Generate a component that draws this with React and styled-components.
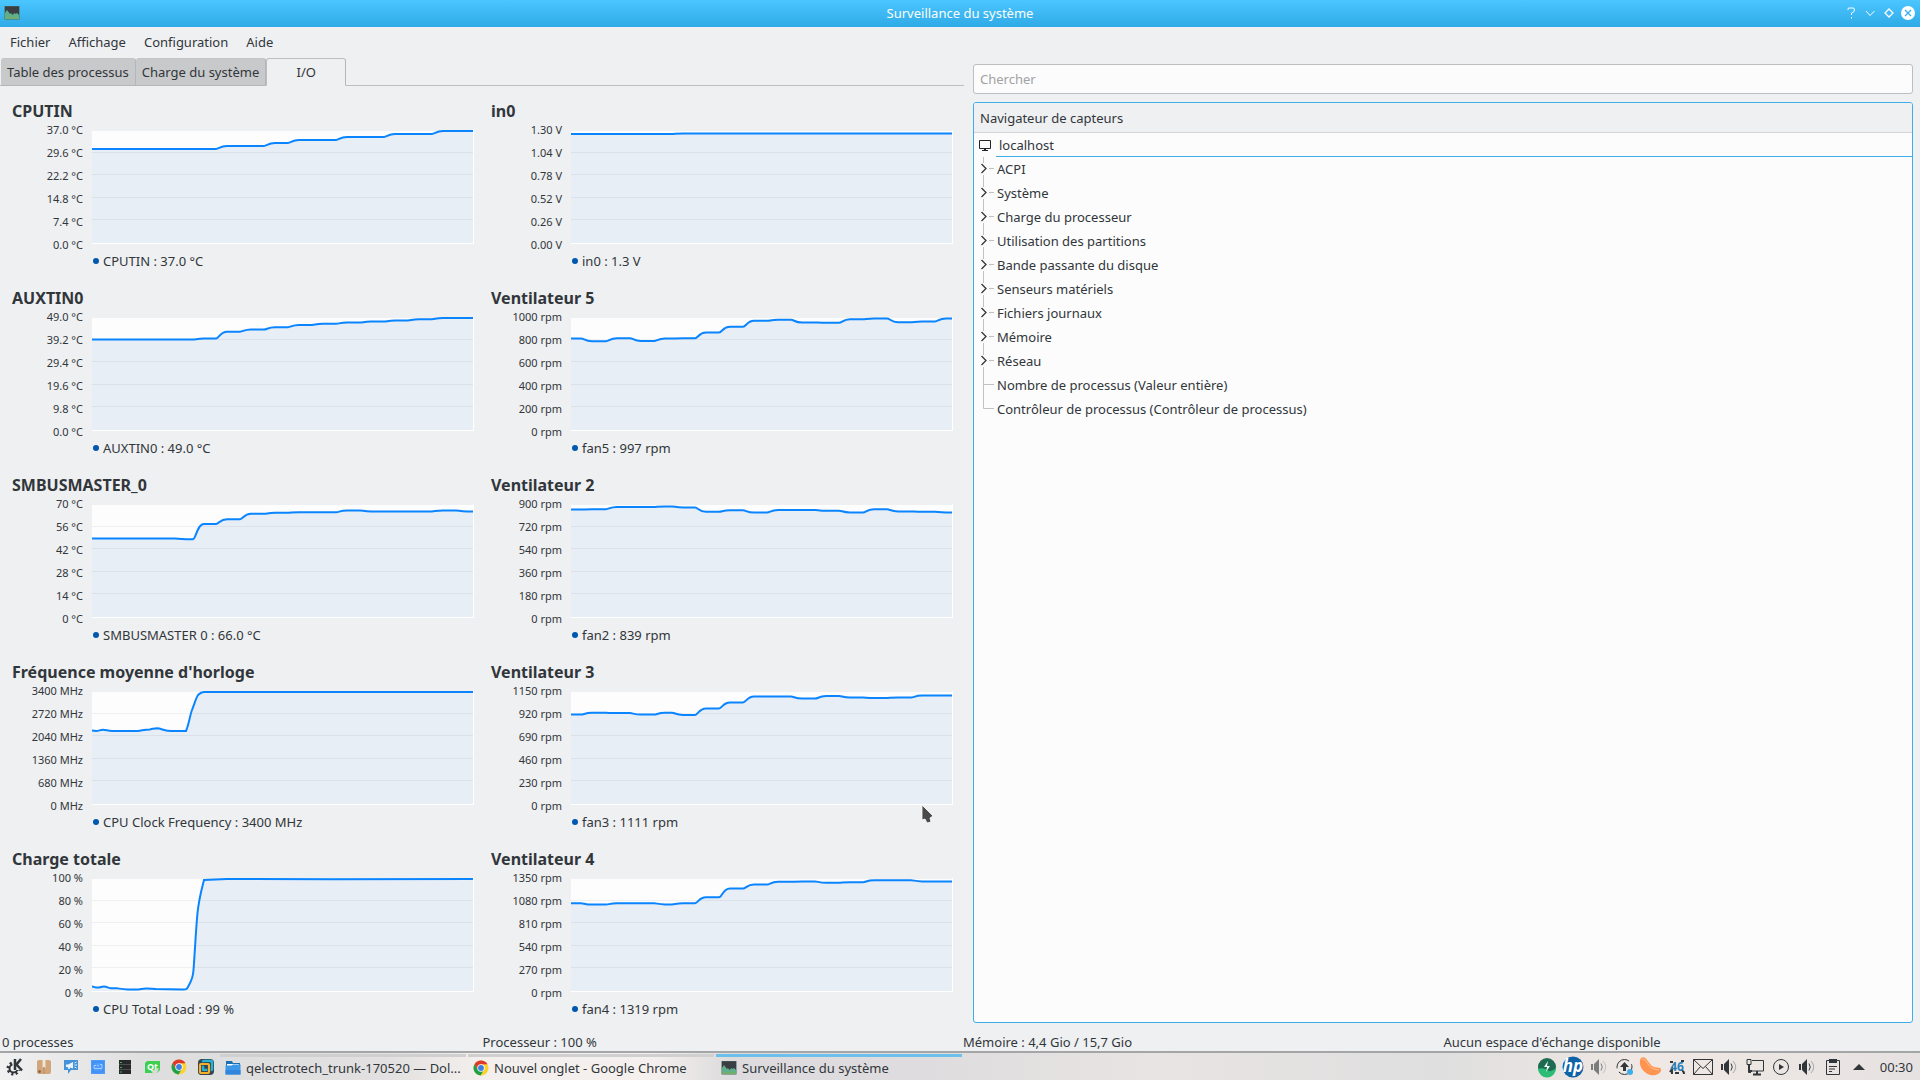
import { useState } from "react";
import styled, { createGlobalStyle } from "styled-components";

const GlobalStyle = createGlobalStyle`
  * {
    box-sizing: border-box;
  }

  body {
    margin: 0;
    background: #eff0f1;
    color: #31363b;
    font: 13px/18px "Noto Sans", "Open Sans", sans-serif;
  }

  button,
  input {
    font: inherit;
    color: inherit;
  }

  button {
    border: 0;
    padding: 0;
    background: none;
  }
`;

// x positions where the plotted value moves to the next level
const BREAKS = [10, 35, 59, 83, 101, 124, 148, 172, 196, 220, 244, 268, 292, 316, 340, 364];

const stepPath = (levels) => {
  let d = `M0 ${levels[0]}`;
  BREAKS.forEach((x, i) => {
    const from = levels[i];
    const to = levels[i + 1];
    d += ` L${x} ${from} C${x + 3} ${from} ${x + 4} ${to} ${x + 11} ${to}`;
  });
  return `${d} L381 ${levels[16]}`;
};

const FREQUENCY =
  "M0 39.5 L4 40 C7 40 8 38.8 11 38.8 C14 38.8 16 40 20 40 L46 40 C50 39.6 52 38.6 58 38.4 C61 38 62 37.3 65 37.3 C70 37.6 72 40 80 40 L94 40 C97 33 98 24 100 19 C102 14 104 7 106 4 Q109 1 112 1 L381 1";
const LOAD =
  "M0 108.5 C3 109 3 109.8 6 109.6 S9 108.4 12 108.4 S15 110.2 19 110.2 L25 110.3 C30 111 32 111.3 36 111.4 L46 111.4 C50 110.8 52 110.4 55 110.5 L64 111.1 L90 111.6 C95 111.8 95 111 97 107 Q101 100 101.500 92 C103 72 104 50 105.500 35 C107 20 110 10 112 2 L135 1 L240 1.300 L381 1";

const SENSORS = [
  {
    title: "CPUTIN",
    ticks: ["37.0 °C", "29.6 °C", "22.2 °C", "14.8 °C", "7.4 °C", "0.0 °C"],
    legend: "CPUTIN : 37.0 °C",
    path: stepPath([19, 19, 19, 19, 19, 19, 16, 16, 13, 10, 10, 7, 7, 4, 4, 1, 1]),
  },
  {
    title: "in0",
    ticks: ["1.30 V", "1.04 V", "0.78 V", "0.52 V", "0.26 V", "0.00 V"],
    legend: "in0 : 1.3 V",
    path: stepPath([4, 4, 4, 4, 4, 3.5, 3.5, 3.5, 3.5, 3.5, 3.5, 3.5, 3.5, 3.5, 3.5, 3.5, 3.5]),
  },
  {
    title: "AUXTIN0",
    ticks: ["49.0 °C", "39.2 °C", "29.4 °C", "19.6 °C", "9.8 °C", "0.0 °C"],
    legend: "AUXTIN0 : 49.0 °C",
    path: stepPath([22.5, 22.5, 22.5, 22.5, 22.5, 21.5, 14.7, 12.5, 10.2, 8, 6.8, 5.6, 4.6, 3.5, 2.2, 1, 1]),
  },
  {
    title: "Ventilateur 5",
    ticks: ["1000 rpm", "800 rpm", "600 rpm", "400 rpm", "200 rpm", "0 rpm"],
    legend: "fan5 : 997 rpm",
    path: stepPath([21.5, 24.2, 21.2, 24, 21.5, 21.2, 15.5, 9.8, 3.8, 2.8, 5.5, 5.8, 2.2, 1.5, 5.2, 4.5, 1.5]),
  },
  {
    title: "SMBUSMASTER_0",
    ticks: ["70 °C", "56 °C", "42 °C", "28 °C", "14 °C", "0 °C"],
    legend: "SMBUSMASTER 0 : 66.0 °C",
    path: stepPath([34.5, 34.5, 34.5, 34.5, 35.2, 20, 15.2, 9.8, 8.8, 8.2, 8.2, 6.5, 7.4, 7.4, 7.4, 6.5, 7.4]),
  },
  {
    title: "Ventilateur 2",
    ticks: ["900 rpm", "720 rpm", "540 rpm", "360 rpm", "180 rpm", "0 rpm"],
    legend: "fan2 : 839 rpm",
    path: stepPath([5.6, 5.2, 3, 3, 2.4, 3.4, 7.8, 6.3, 8.5, 5.9, 5.9, 6.7, 8.5, 5.3, 7.4, 7.8, 8.5]),
  },
  {
    title: "Fréquence moyenne d'horloge",
    ticks: ["3400 MHz", "2720 MHz", "2040 MHz", "1360 MHz", "680 MHz", "0 MHz"],
    legend: "CPU Clock Frequency : 3400 MHz",
    path: FREQUENCY,
  },
  {
    title: "Ventilateur 3",
    ticks: ["1150 rpm", "920 rpm", "690 rpm", "460 rpm", "230 rpm", "0 rpm"],
    legend: "fan3 : 1111 rpm",
    path: stepPath([23.6, 21.8, 22.1, 23.6, 21.8, 23.9, 17.4, 11.5, 5.5, 5.5, 7.6, 5.1, 6.5, 6.9, 6.5, 4.6, 4.6]),
  },
  {
    title: "Charge totale",
    ticks: ["100 %", "80 %", "60 %", "40 %", "20 %", "0 %"],
    legend: "CPU Total Load : 99 %",
    path: LOAD,
  },
  {
    title: "Ventilateur 4",
    ticks: ["1350 rpm", "1080 rpm", "810 rpm", "540 rpm", "270 rpm", "0 rpm"],
    legend: "fan4 : 1319 rpm",
    path: stepPath([25.2, 26.6, 25.3, 25.2, 26.4, 25.2, 19.3, 10.5, 6.5, 3.8, 3.4, 4.8, 4.2, 2.2, 2.2, 3.4, 3.4]),
  },
];

const BRANCHES = [
  "ACPI",
  "Système",
  "Charge du processeur",
  "Utilisation des partitions",
  "Bande passante du disque",
  "Senseurs matériels",
  "Fichiers journaux",
  "Mémoire",
  "Réseau",
];
const LEAVES = [
  "Nombre de processus (Valeur entière)",
  "Contrôleur de processus (Contrôleur de processus)",
];

const Chart = ({ sensor }) => (
  <ChartCell>
    <ChartTitle>{sensor.title}</ChartTitle>
    <ChartBody>
      <Ticks>
        {sensor.ticks.map((tick) => (
          <span key={tick}>{tick}</span>
        ))}
      </Ticks>
      <Plot viewBox="0 0 382 114" preserveAspectRatio="none" aria-hidden="true">
        <rect y="1" width="382" height="113" fill="#fdfdfd" />
        <path d={`${sensor.path} V113 H0 Z`} fill="#e7eef6" />
        {[22, 44, 67, 89].map((y) => (
          <rect key={y} y={y} width="381" height="1" fill="#000" opacity="0.05" />
        ))}
        <rect y="113" width="382" height="1" fill="#fff" />
        <rect x="381" width="1" height="114" fill="#fff" />
        <path d={sensor.path} fill="none" stroke="#0a84ff" strokeWidth="2" />
      </Plot>
    </ChartBody>
    <Legend>{sensor.legend}</Legend>
  </ChartCell>
);

const MonitorIcon = ({ size = 16 }) => (
  <svg width={size} height={size} viewBox="0 0 16 16" aria-hidden="true">
    <rect x="0.500" y="1" width="15" height="13.500" fill="#4d6b62" />
    <rect x="1" y="1.500" width="14" height="10" fill="#3a3f44" />
    <path d="M1 13V8L3 5l3 4 1-1 1.500 2 2-2 1 1 1.500-1L15 10v3z" fill="#5fb08a" />
    <rect x="1" y="12" width="14" height="2" fill="#6fae6d" />
  </svg>
);

const ChromeIcon = ({ size = 16 }) => (
  <svg width={size} height={size} viewBox="0 0 16 16" aria-hidden="true">
    <circle cx="8" cy="8" r="7.500" fill="#fdd22e" />
    <path d="M1.500 4.250A7.500 7.500 0 0 1 14.500 4.250L8 4.500 4.700 9.800z" fill="#de3a2b" />
    <path d="M1.500 4.250A7.500 7.500 0 0 0 7.600 15.500L11 9.800 4.900 9.800z" fill="#1fa04b" />
    <circle cx="8" cy="8" r="3.700" fill="#fff" />
    <circle cx="8" cy="8" r="2.900" fill="#3f7fe0" />
  </svg>
);

const FolderIcon = () => (
  <svg width="16" height="16" viewBox="0 0 16 16" aria-hidden="true">
    <path d="M1 1h6l1 2h7v3H1z" fill="#1b6fb5" />
    <rect x="2" y="4" width="12" height="3" fill="#fff" />
    <path d="M0.500 5.500h6l1.500-1h7.500V14.500h-15z" fill="#3d97e8" />
    <path d="M0.500 10h15v4.500h-15z" fill="#2f86dc" />
  </svg>
);

const LAUNCHERS = [
  {
    name: "Menu d'applications",
    icon: (
      <g transform="translate(-2 0)">
        <circle cx="6.500" cy="9.500" r="5.500" fill="none" stroke="#31363b" strokeWidth="3" strokeDasharray="2 2.300" />
        <circle cx="6.500" cy="9.500" r="4" fill="none" stroke="#31363b" strokeWidth="2" />
        <rect x="5.500" y="-1" width="11" height="12" fill="#ededee" />
        <path d="M8 0v11M14 0L9.500 5.500l5.500 6" fill="none" stroke="#31363b" strokeWidth="2.500" />
      </g>
    ),
  },
  {
    name: "Paquets",
    icon: (
      <>
        <rect x="1" y="1" width="14" height="14" rx="2" fill="#d1a67c" />
        <path d="M6.500 1h3v8l-1.500-1-1.500 1z" fill="#f3e4d2" />
        <path d="M8 8v7" stroke="#b98a60" />
        <circle cx="3.500" cy="12.500" r="1.500" fill="#8f6a48" />
      </>
    ),
  },
  {
    name: "Messages",
    icon: (
      <>
        <path d="M1 1h14v10H8l-3 4v-4H1z" fill="#4592d6" />
        <path d="M3 5.500h2l5-2.500v6.500L5 8H3zM4.500 8h2l.5 2H5.500z" fill="#e8f4ff" />
        <path d="M11.500 4l2-1M11.500 6h2.500M11.500 8l2 1" stroke="#e8f4ff" />
      </>
    ),
  },
  {
    name: "QElectroTech",
    icon: (
      <>
        <rect x="1" y="1" width="14" height="14" fill="#4d9bff" />
        <path d="M3 3h10v10H3z" fill="none" stroke="#3c86ea" />
        <path d="M4 9.500V6.500h2M10 5.500h2v4M4 9.500h8M7 6l2 1" fill="none" stroke="#a5d0ff" />
      </>
    ),
  },
  {
    name: "Terminal",
    icon: (
      <>
        <rect x="2" y="1" width="12" height="14" fill="#26282a" />
        <path d="M2 5.500h12M2 10.500h12" stroke="#4b4f52" />
        <path d="M3 3.500h2M3 8.500h2M3 13h2" stroke="#3bb24a" />
      </>
    ),
  },
  {
    name: "Qt Creator",
    icon: (
      <>
        <path d="M3 2h13v9l-3 3H1V4z" fill="#3fcf4f" />
        <text x="3" y="11" fontSize="9" fontWeight="700" fill="#fff">
          Qt
        </text>
        <path d="M8 15l1-4 6-2-2 5-3 2z" fill="#d8dbd8" />
      </>
    ),
  },
  { name: "Google Chrome", icon: null },
  {
    name: "VMware",
    icon: (
      <>
        <rect width="16" height="16" rx="4" fill="#34464f" />
        <rect x="5" y="2" width="9" height="9" rx="1" fill="none" stroke="#26b4d6" strokeWidth="2.500" />
        <rect x="2" y="5" width="9" height="9" rx="1" fill="none" stroke="#34464f" strokeWidth="3.500" />
        <rect x="2" y="5" width="9" height="9" rx="1" fill="none" stroke="#f5ae2d" strokeWidth="2.200" />
      </>
    ),
  },
];

const Speaker = ({ faded }) => (
  <g fill="#31363b" opacity={faded ? 0.6 : 1}>
    <path d="M0 5h2v6H0zM3 5l5-5v16l-5-5z" />
    <path d="M10 4.500q2.500 3.500 0 7" fill="none" stroke="#31363b" />
    <path d="M12 2q5.500 6 0 12" fill="none" stroke="#a5a8ab" />
  </g>
);

const TRAY = [
  {
    name: "Énergie",
    icon: (
      <>
        <circle cx="8" cy="8" r="9" fill="#1f6b52" />
        <path d="M-1 10q5-2 9 1t9-2a9 9 0 0 1-18 1z" fill="#2bbd76" />
        <path d="M9 2L5 8h3l-1 5 4-6H8z" fill="#e9fff3" />
      </>
    ),
  },
  {
    name: "HP",
    icon: (
      <>
        <circle cx="8" cy="8" r="10.500" fill="#0d62a8" />
        <text x="8" y="13" textAnchor="middle" fontSize="17" fontWeight="700" fontStyle="italic" fill="#fff">
          hp
        </text>
      </>
    ),
  },
  { name: "Son", icon: <Speaker faded /> },
  {
    name: "Mises à jour",
    icon: (
      <>
        <circle cx="7.500" cy="8" r="7.500" fill="none" stroke="#31363b" strokeDasharray="18 4" />
        <path d="M7.500 3L3 8h3v4h3V8h3z" fill="#31363b" />
        <circle cx="13" cy="13" r="3" fill="#3daee9" />
      </>
    ),
  },
  {
    name: "Clementine",
    icon: (
      <>
        <path d="M-2-1C3-4 5 4 9 7s9 0 9 4-8 8-15 3S-4 2-2-1z" fill="#ff9450" />
        <path d="M-1 0q4 0 6 5t11 6" fill="none" stroke="#ffc08e" />
      </>
    ),
  },
  {
    name: "Température",
    icon: (
      <>
        <path d="M1 3h3M1 13l2-3v5M13 12q2 0 2 3M6 14h4M12 2h3" fill="none" stroke="#31363b" strokeWidth="2" />
        <text x="8" y="12" textAnchor="middle" fontSize="12" fontWeight="700" fill="#2980b9">
          46
        </text>
      </>
    ),
  },
  {
    name: "Courrier",
    icon: <path d="M-1.500 0.500h19v15h-19zl9.500 9 9.500-9M-1.500 15.500l7-8M17.500 15.500l-7-8" fill="none" stroke="#31363b" />,
  },
  { name: "Volume 1", icon: <Speaker /> },
  {
    name: "Réseau",
    icon: (
      <>
        <path d="M5 1.500h11.500v10.500H4M1.500 7v6.500H4" fill="none" stroke="#31363b" />
        <path d="M0 0.500h4v5H0z" fill="none" stroke="#31363b" />
        <path d="M2 6v6h3M10 12v3M6 15.500h8" fill="none" stroke="#31363b" strokeWidth="2" />
      </>
    ),
  },
  {
    name: "Lecture",
    icon: (
      <>
        <circle cx="8" cy="8" r="7.500" fill="none" stroke="#31363b" />
        <path d="M6 5l5 3-5 3z" fill="#31363b" />
      </>
    ),
  },
  { name: "Volume 2", icon: <Speaker /> },
  {
    name: "Presse-papiers",
    icon: (
      <>
        <path d="M1.500 1.500h13v14h-13z" fill="none" stroke="#31363b" />
        <path d="M4 0h8v4H4z" fill="#31363b" />
        <path d="M4 7.500h8M4 10h6M4 12.500h3" stroke="#31363b" />
      </>
    ),
  },
  { name: "Afficher plus", icon: <path d="M2 11l6-6 6 6z" fill="#31363b" /> },
];

const App = () => {
  const [tab, setTab] = useState("I/O");

  return (
    <Desktop>
      <GlobalStyle />
      <TitleBar>
        <TitleIcon>
          <MonitorIcon />
        </TitleIcon>
        <WindowTitle>Surveillance du système</WindowTitle>
        <WindowButtons>
          <WindowButton aria-label="Aide">
            <svg width="16" height="16" viewBox="0 0 16 16" fill="none" stroke="#fff">
              <path d="M5 5V4q0-1 1-1h4q1.500 0 1.500 2T8.500 8v2M8.500 12v1.500" />
            </svg>
          </WindowButton>
          <WindowButton aria-label="Réduire">
            <svg width="16" height="16" viewBox="0 0 16 16" fill="none" stroke="#fff">
              <path d="M4 6l4 4.500L12.500 6" />
            </svg>
          </WindowButton>
          <WindowButton aria-label="Restaurer">
            <svg width="16" height="16" viewBox="0 0 16 16" fill="none" stroke="#fff" strokeWidth="1.300">
              <path d="M8 4l4 4-4 4-4-4z" />
            </svg>
          </WindowButton>
          <WindowButton aria-label="Fermer">
            <svg width="16" height="16" viewBox="0 0 16 16">
              <circle cx="8" cy="8" r="7" fill="#fff" />
              <path d="M5 5l6 6M11 5l-6 6" stroke="#35b0ee" strokeWidth="1.300" />
            </svg>
          </WindowButton>
        </WindowButtons>
      </TitleBar>

      <MenuBar>
        {["Fichier", "Affichage", "Configuration", "Aide"].map((item) => (
          <MenuButton key={item}>{item}</MenuButton>
        ))}
      </MenuBar>

      <Main>
        <Worksheet>
          <Tabs role="tablist">
            {["Table des processus", "Charge du système", "I/O"].map((name) => (
              <Tab key={name} role="tab" aria-selected={tab === name} $active={tab === name} onClick={() => setTab(name)}>
                {name}
              </Tab>
            ))}
          </Tabs>
          <Charts>
            {SENSORS.map((sensor) => (
              <Chart key={sensor.title} sensor={sensor} />
            ))}
          </Charts>
        </Worksheet>

        <Sidebar>
          <Search type="search" placeholder="Chercher" aria-label="Chercher" />
          <Browser>
            <BrowserHeader>Navigateur de capteurs</BrowserHeader>
            <HostRow>
              <svg width="12" height="11" viewBox="0 0 12 11" aria-hidden="true">
                <path d="M0.500 0.500h11v8h-11z" fill="none" stroke="#232629" />
                <path d="M5 8.500h2V10h2v1H3v-1h2z" fill="#232629" />
              </svg>
              <HostName>localhost</HostName>
            </HostRow>
            <Tree>
              {BRANCHES.map((name) => (
                <TreeRow key={name}>
                  <Expander aria-label={`Développer ${name}`}>
                    <svg width="16" height="24" viewBox="0 0 16 24">
                      <path d="M3.500 0v6M3.500 18v6M9 11.500h5" stroke="#bfc1c2" />
                      <path d="M1.500 7L6 11.500 1.500 16" fill="none" stroke="#31363b" strokeWidth="1.300" />
                    </svg>
                  </Expander>
                  {name}
                </TreeRow>
              ))}
              {LEAVES.map((name, i) => (
                <TreeRow key={name}>
                  <svg width="16" height="24" viewBox="0 0 16 24" aria-hidden="true">
                    <path
                      d={i === LEAVES.length - 1 ? "M3.500 0v11.500H14" : "M3.500 0v24M3.500 11.500H14"}
                      fill="none"
                      stroke="#bfc1c2"
                    />
                  </svg>
                  {name}
                </TreeRow>
              ))}
            </Tree>
          </Browser>
        </Sidebar>
      </Main>

      <StatusBar>
        <span>0 processes</span>
        <span>Processeur : 100 %</span>
        <span>Mémoire : 4,4 Gio / 15,7 Gio</span>
        <span>Aucun espace d'échange disponible</span>
      </StatusBar>

      <Panel>
        <Launchers>
          {LAUNCHERS.map(({ name, icon }) => (
            <PanelButton key={name} aria-label={name}>
              {icon ? (
                <svg width="16" height="16" viewBox="0 0 16 16" overflow="visible">
                  {icon}
                </svg>
              ) : (
                <ChromeIcon />
              )}
            </PanelButton>
          ))}
        </Launchers>
        <Tasks>
          <Task>
            <FolderIcon />
            <TaskLabel>qelectrotech_trunk-170520 — Dol...</TaskLabel>
          </Task>
          <Task>
            <ChromeIcon />
            <TaskLabel>Nouvel onglet - Google Chrome</TaskLabel>
          </Task>
          <Task $active>
            <MonitorIcon />
            <TaskLabel>Surveillance du système</TaskLabel>
          </Task>
        </Tasks>
        <Tray>
          {TRAY.map(({ name, icon }) => (
            <PanelButton key={name} aria-label={name} $tray>
              <svg width="16" height="16" viewBox="0 0 16 16" overflow="visible">
                {icon}
              </svg>
            </PanelButton>
          ))}
          <Clock>00:30</Clock>
        </Tray>
      </Panel>

      <Pointer width="14" height="22" viewBox="0 0 14 22" aria-hidden="true">
        <path d="M1 1v15l3-1 2 4 4-1-1-4 3-2z" fill="#4a4a4a" stroke="#fff" strokeOpacity="0.8" />
      </Pointer>
    </Desktop>
  );
};

export default App;

const Desktop = styled.div`
  position: relative;
  display: flex;
  flex-direction: column;
  min-height: 100vh;
`;

const TitleBar = styled.header`
  display: grid;
  grid-template-columns: 1fr auto 1fr;
  align-items: center;
  height: 27px;
  padding: 0 4px 2px;
  background: linear-gradient(#4cc6ff, #2eaae6);
  color: #fcfcfc;
`;

const TitleIcon = styled.span`
  display: flex;
`;

const WindowTitle = styled.h1`
  margin: 0;
  font-size: 13px;
  font-weight: 400;
`;

const WindowButtons = styled.div`
  display: flex;
  justify-content: flex-end;
  gap: 3px;
`;

const WindowButton = styled.button`
  display: flex;
`;

const MenuBar = styled.nav`
  display: flex;
  height: 31px;
  padding: 0 1px 2px;
`;

const MenuButton = styled.button`
  padding: 0 9px;
`;

const Main = styled.main`
  flex: 1;
  display: grid;
  grid-template-columns: 964fr 940fr;
  gap: 9px;
  padding-right: 7px;
`;

const Worksheet = styled.section`
  min-width: 0;
`;

const Tabs = styled.div`
  display: flex;
  height: 28px;
  padding-left: 1px;
  box-shadow: inset 0 -1px #bcbebf;
`;

const Tab = styled.button`
  min-width: 80px;
  padding: 0 6px;
  border: 1px solid ${({ $active }) => ($active ? "#bcbebf" : "#c4c6c7")};
  border-bottom-color: ${({ $active }) => ($active ? "#eff0f1" : "#b4b6b7")};
  border-right-color: #b4b6b7;
  border-left-width: ${({ $active }) => ($active ? "1px" : "0")};
  border-radius: 3px 3px 0 0;
  background: ${({ $active }) => ($active ? "#eff0f1" : "#c8c9ca")};
`;

const Charts = styled.div`
  display: grid;
  grid-template-columns: 1fr 1fr;
  gap: 20px 17px;
  padding: 18px 11px 0 12px;
`;

const ChartCell = styled.article`
  min-width: 0;
`;

const ChartTitle = styled.h2`
  margin: 0;
  font-size: 16px;
  line-height: 14px;
`;

const ChartBody = styled.div`
  display: flex;
  align-items: center;
  gap: 9px;
`;

const Ticks = styled.div`
  display: flex;
  flex-direction: column;
  flex: 0 0 71px;
  font-size: 11px;
  line-height: 23px;
  text-align: right;
`;

const Plot = styled.svg`
  flex: 1;
  min-width: 0;
  height: 114px;
`;

const Legend = styled.div`
  display: flex;
  align-items: center;
  gap: 4px;
  padding-left: 81px;
  line-height: 20px;
  margin-top: -5px;

  &::before {
    content: "";
    width: 6px;
    height: 6px;
    border-radius: 50%;
    background: #0057ae;
  }
`;

const Sidebar = styled.aside`
  display: flex;
  flex-direction: column;
  gap: 8px;
  min-width: 0;
  padding-top: 6px;
`;

const Search = styled.input`
  width: 100%;
  height: 30px;
  padding: 0 6px;
  border: 1px solid #bcbebf;
  border-radius: 3px;
  background: #fcfcfc;
  outline: none;

  &::placeholder {
    color: #a0a2a4;
  }
`;

const Browser = styled.div`
  flex: 1;
  border: 1px solid #3daee9;
  border-radius: 3px;
  background: #fcfcfc;
  overflow: hidden;
`;

const BrowserHeader = styled.div`
  padding: 2px 6px 0;
  border-bottom: 1px solid #d3d5d6;
  background: #eff0f1;
  line-height: 27px;
`;

const HostRow = styled.div`
  display: flex;
  align-items: center;
  gap: 5px;
  padding-left: 5px;
`;

const HostName = styled.span`
  flex: 1;
  padding: 2px 0 0 3px;
  border-bottom: 1px solid #3daee9;
  line-height: 21px;
`;

const Tree = styled.ul`
  margin: 0;
  padding: 0 0 0 6px;
  list-style: none;
`;

const TreeRow = styled.li`
  display: flex;
  align-items: center;
  gap: 1px;
  height: 24px;
`;

const Expander = styled.button`
  display: flex;
`;

const StatusBar = styled.footer`
  display: grid;
  grid-template-columns: repeat(4, 1fr);
  gap: 2px;
  padding-top: 10px;
  border-bottom: 2px solid #a3a5a6;

  span {
    padding-left: 2px;
  }
`;

const Panel = styled.footer`
  display: flex;
  height: 27px;
  background: linear-gradient(
    90deg,
    #f1f1f2,
    #dedede 8%,
    #e2e0e0 20%,
    #f2efec 25%,
    #f5f0ed 34%,
    #dddbdd 38%,
    #dedcde 48%,
    #e8e4e3 60%,
    #dfdfdf 75%,
    #f0e8e4 86%,
    #e6e2e1
  );
`;

const Launchers = styled.div`
  display: flex;
  padding: 0 1px 0 3px;
`;

const PanelButton = styled.button`
  display: flex;
  align-items: center;
  justify-content: center;
  width: ${({ $tray }) => ($tray ? "26px" : "27px")};
`;

const Tasks = styled.div`
  display: flex;
  flex: 1;
  gap: 2px;
  padding-top: 1px;
`;

const Task = styled.button`
  display: flex;
  align-items: center;
  gap: 5px;
  flex: 0 1 246px;
  min-width: 0;
  padding: 0 5px 2px;
  border-top: 3px solid ${({ $active }) => ($active ? "#6cc0ea" : "#d0d0d0")};
`;

const TaskLabel = styled.span`
  overflow: hidden;
  white-space: nowrap;
`;

const Tray = styled.div`
  display: flex;
  align-items: center;
  padding-right: 7px;
`;

const Clock = styled.time`
  padding-left: 8px;
`;

// the mouse pointer floats over the window
const Pointer = styled.svg`
  position: absolute;
  left: 921px;
  top: 804px;
`;
